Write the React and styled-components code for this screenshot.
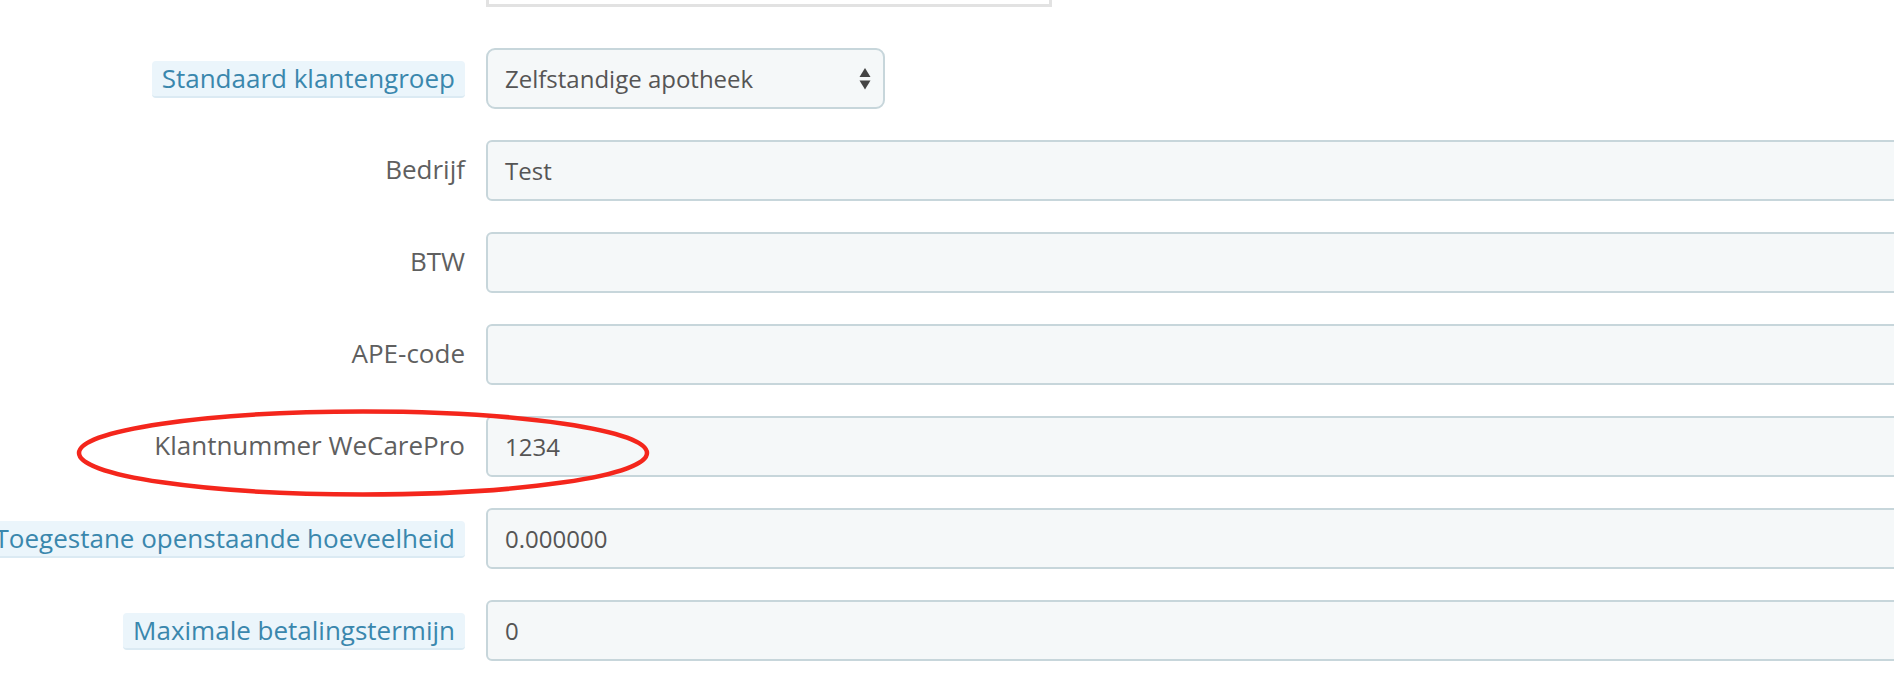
import React from 'react'
import styled, { createGlobalStyle } from 'styled-components'

const GlobalStyle = createGlobalStyle`
html, body {
    margin: 0;
    padding: 0;
    background: #fff;
    overflow: hidden;
}
body {
    font-family: 'Open Sans', 'Liberation Sans', sans-serif;
}
`

const Page = styled.div`
position: relative;
width: 1894px;
height: 688px;
overflow: hidden;
`

const Form = styled.div`
display: flex;
flex-direction: column;
gap: 31px;
`

const TopBox = styled.div`
margin-left: 486px;
width: 560px;
height: 4px;
background: #fff;
border: 3px solid #e2e2e2;
border-top: none;
margin-bottom: 41px;
`

const Row = styled.div`
display: flex;
align-items: center;
gap: 21px;
height: 61px;
`

const LabelCol = styled.div`
width: 465px;
flex-shrink: 0;
display: flex;
justify-content: flex-end;
`

const Label = styled.label`
font-size: 26px;
line-height: 35px;
white-space: nowrap;
color: ${props => props.hint ? '#3a87ad' : '#5f5f5f'};
background: ${props => props.hint ? '#ebf5fb' : 'transparent'};
border-bottom: 2px solid ${props => props.hint ? '#dbeaf3' : 'transparent'};
border-radius: 4px;
padding: ${props => props.hint ? '0 10px' : '0'};
margin-top: ${props => props.hint ? '2px' : '0'};
`

const Field = styled.div`
box-sizing: border-box;
height: 61px;
width: ${props => props.narrow ? '399px' : '1600px'};
flex-shrink: 0;
background: #f5f8f9;
border: 2px solid #c7d6db;
border-radius: ${props => props.narrow ? '9px' : '6px'};
display: flex;
align-items: center;
justify-content: space-between;
padding: 0 10px 0 17px;
font-size: 24px;
color: #555;
`

const Arrows = styled.svg`
width: 12px;
height: 22px;
margin-right: 2px;
`

const Ring = styled.svg`
position: absolute;
left: 0;
top: 0;
pointer-events: none;
`

const rows = [
    { label: 'Standaard klantengroep', hint: true, value: 'Zelfstandige apotheek', select: true },
    { label: 'Bedrijf', value: 'Test' },
    { label: 'BTW', value: '' },
    { label: 'APE-code', value: '' },
    { label: 'Klantnummer WeCarePro', value: '1234' },
    { label: 'Toegestane openstaande hoeveelheid', hint: true, value: '0.000000' },
    { label: 'Maximale betalingstermijn', hint: true, value: '0' },
]

export default function App() {
    return (
        <Page>
            <GlobalStyle />
            <TopBox />
            <Form>
                {rows.map((r, i) => (
                    <Row key={i}>
                        <LabelCol>
                            <Label hint={r.hint}>{r.label}</Label>
                        </LabelCol>
                        <Field narrow={r.select}>
                            <span>{r.value}</span>
                            {r.select && (
                                <Arrows viewBox="0 0 12 22">
                                    <path d="M6 0 L11.5 9 L0.5 9 Z" fill="#444" />
                                    <path d="M0.5 12.5 L11.5 12.5 L6 21.5 Z" fill="#444" />
                                </Arrows>
                            )}
                        </Field>
                    </Row>
                ))}
            </Form>
            <Ring width="1894" height="688">
                <ellipse cx="363" cy="453" rx="284" ry="41.5" fill="none" stroke="#f4261c" strokeWidth="4.5" />
            </Ring>
        </Page>
    )
}
